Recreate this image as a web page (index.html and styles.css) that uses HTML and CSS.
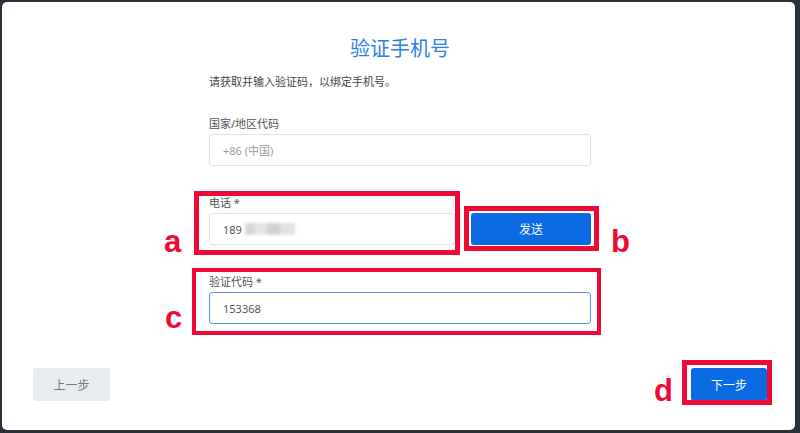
FILE: index.html
```html
<!DOCTYPE html>
<html lang="zh-CN">
<head>
    <meta charset="UTF-8">
    <meta name="viewport" content="width=device-width, initial-scale=1.0">
    <title>验证手机号</title>
    <link rel="stylesheet" href="styles.css">
</head>
<body>
    <div class="panel">
        <form class="content" id="verifyForm">
            <h1 class="title">验证手机号</h1>
            <p class="hint">请获取并输入验证码，以绑定手机号。</p>

            <label class="label label-first" for="country">国家/地区代码</label>
            <input class="input" type="text" id="country" placeholder="+86 (中国)">

            <label class="label" for="phone">电话 *</label>
            <div class="phone-row">
                <div class="phone-wrap">
                    <input class="input" type="text" id="phone" value="189">
                    <span class="blur"></span>
                </div>
                <button class="btn btn-primary" type="button">发送</button>
            </div>

            <label class="label" for="code">验证代码 *</label>
            <input class="input input-focus" type="text" id="code" value="153368">
        </form>

        <div class="footer">
            <button class="btn btn-back" type="button">上一步</button>
            <button class="btn btn-primary btn-next" type="button">下一步</button>
        </div>

        <!-- Markierungen -->
        <div class="mark mark-a"></div>
        <div class="mark mark-b"></div>
        <div class="mark mark-c"></div>
        <div class="mark mark-d"></div>
        <span class="letter letter-a">a</span>
        <span class="letter letter-b">b</span>
        <span class="letter letter-c">c</span>
        <span class="letter letter-d">d</span>
    </div>
</body>
</html>
```

FILE: styles.css
```css
body {
    margin: 0;
    padding: 2px 5px 3px 2px;
    background-color: #2b3139;
    font-family: 'Noto Sans', 'Noto Sans CJK SC', sans-serif;
    box-sizing: border-box;
    height: 433px;
    overflow: hidden;
}
.panel {
    position: relative;
    background-color: white;
    border-radius: 5px;
    height: 428px;
    box-sizing: border-box;
    padding-top: 33px;
}
.content {
    width: 382px;
    margin-left: 207px;
}
.title {
    margin: 0;
    font-size: 20px;
    line-height: 28px;
    font-weight: normal;
    text-align: center;
    color: #2a7fe8;
}
.hint {
    margin: 11px 0 0 0;
    font-size: 11px;
    line-height: 16px;
    color: #444;
}
.label {
    display: block;
    margin: 29px 0 2px 0;
    font-size: 11px;
    line-height: 16px;
    color: #555;
}
.label-first {
    margin-top: 26px;
}
.input {
    display: block;
    width: 100%;
    height: 32px;
    padding: 0 13px;
    border: 1px solid #dce3eb;
    border-radius: 3px;
    font-family: 'Noto Sans', 'Noto Sans CJK SC', sans-serif;
    font-size: 11px;
    color: #555;
    background: white;
    box-sizing: border-box;
    outline: none;
}
.input::placeholder {
    color: #9a9a9a;
}
.input-focus {
    border-color: #5a92e6;
}
.phone-row {
    display: grid;
    grid-template-columns: 1fr 120px;
    gap: 16px;
}
.phone-wrap {
    position: relative;
}
.blur {
    position: absolute;
    left: 36px;
    top: 10px;
    width: 50px;
    height: 12px;
    background: linear-gradient(90deg, #d8d8d8 0 20%, #e6e6e6 20% 45%, #d2d2d2 45% 70%, #e2e2e2 70% 100%);
    filter: blur(1.5px);
}
.btn {
    height: 32px;
    border: none;
    border-radius: 3px;
    font-family: 'Noto Sans', 'Noto Sans CJK SC', sans-serif;
    font-size: 12px;
    cursor: pointer;
}
.btn-primary {
    background-color: #0a6be2;
    color: white;
}
.footer {
    display: flex;
    justify-content: space-between;
    padding: 0 28px 0 31px;
    margin-top: 44px;
}
.btn-back {
    width: 77px;
    height: 33px;
    background-color: #e8ecf0;
    color: #777;
}
.btn-next {
    width: 76px;
    height: 33px;
}
.mark {
    position: absolute;
    border: 5px solid #ee0a34;
    box-sizing: border-box;
}
.mark-a { left: 192px; top: 189px; width: 266px; height: 64px; }
.mark-b { left: 462px; top: 204px; width: 135px; height: 45px; }
.mark-c { left: 190px; top: 266px; width: 409px; height: 67px; border-width: 4px; }
.mark-d { left: 680px; top: 358px; width: 90px; height: 45px; }
.letter {
    position: absolute;
    font-family: 'Liberation Sans', Arial, sans-serif;
    font-weight: bold;
    font-size: 31px;
    line-height: 30px;
    color: #ee0a34;
}
.letter-a { left: 162px; top: 225px; }
.letter-b { left: 609px; top: 225px; }
.letter-c { left: 163px; top: 301px; }
.letter-d { left: 652px; top: 374px; }
```
